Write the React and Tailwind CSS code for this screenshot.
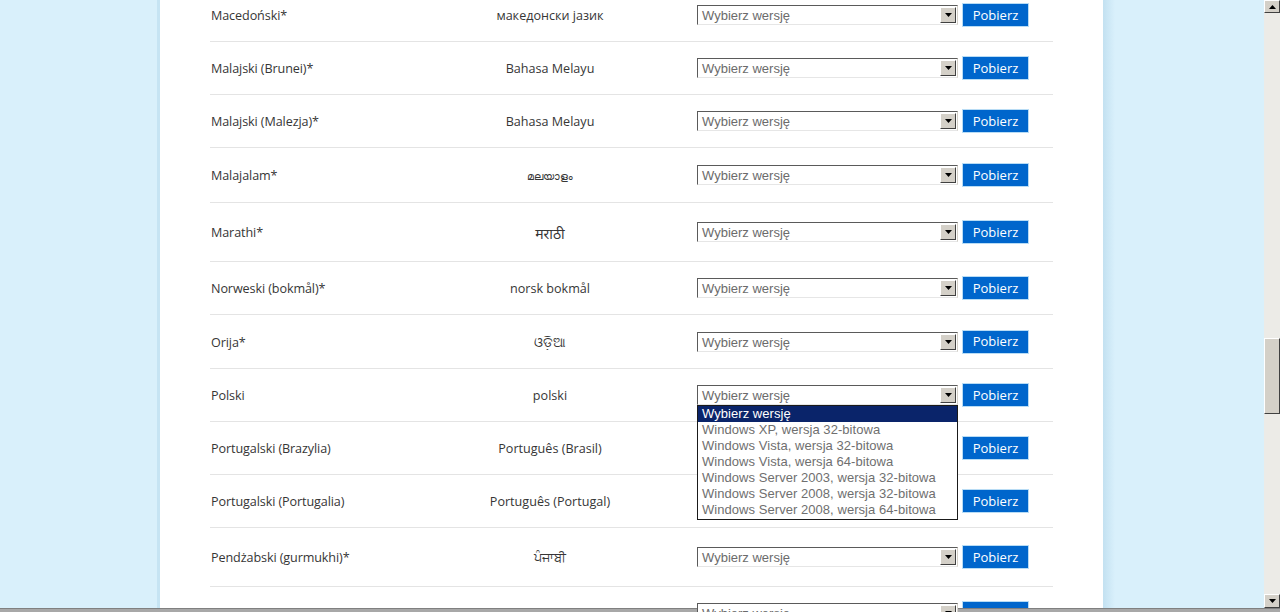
const rows = [
  { name: "Macedoński*", native: "македонски јазик", h: "h-[53px]" },
  { name: "Malajski (Brunei)*", native: "Bahasa Melayu", h: "h-[53px]" },
  { name: "Malajski (Malezja)*", native: "Bahasa Melayu", h: "h-[53px]" },
  { name: "Malajalam*", native: "മലയാളം", h: "h-[55px]", small: true },
  { name: "Marathi*", native: "मराठी", h: "h-[59px]", big: true },
  { name: "Norweski (bokmål)*", native: "norsk bokmål", h: "h-[53px]" },
  { name: "Orija*", native: "ଓଡ଼ିଆ", h: "h-[54px]" },
  { name: "Polski", native: "polski", h: "h-[53px]", open: true },
  { name: "Portugalski (Brazylia)", native: "Português (Brasil)", h: "h-[53px]" },
  { name: "Portugalski (Portugalia)", native: "Português (Portugal)", h: "h-[53px]" },
  { name: "Pendżabski (gurmukhi)*", native: "ਪੰਜਾਬੀ", h: "h-[59px]" },
  { name: "Rumuński", native: "română", h: "h-[53px]" },
];

const options = [
  "Wybierz wersję",
  "Windows XP, wersja 32-bitowa",
  "Windows Vista, wersja 32-bitowa",
  "Windows Vista, wersja 64-bitowa",
  "Windows Server 2003, wersja 32-bitowa",
  "Windows Server 2008, wersja 32-bitowa",
  "Windows Server 2008, wersja 64-bitowa",
];

function Arrow({ up }) {
  return (
    <svg width="7" height="4" viewBox="0 0 7 4">
      <path d={up ? "M0 4 L3.5 0 L7 4 Z" : "M0 0 L7 0 L3.5 4 Z"} fill="#000" />
    </svg>
  );
}

function ClassicButton({ className = "", children }) {
  return (
    <div className={`flex items-center justify-center bg-[#d4d0c8] border border-t-white border-l-white border-r-[#404040] border-b-[#404040] ${className}`}>
      {children}
    </div>
  );
}

function VersionSelect({ open }) {
  return (
    <div className="relative">
      <div className="flex h-[20px] w-[261px] items-center border border-t-[#5a5a5a] border-l-[#5a5a5a] border-r-[#d4d0c8] border-b-[#e6e6e6] bg-white pl-[4px] pr-[1px] font-['Liberation_Sans',Arial,sans-serif] text-[13px] text-[#6b6b6b]">
        <span className="flex-1 pt-[1px] leading-none">Wybierz wersję</span>
        <ClassicButton className="h-[16px] w-[16px]">
          <Arrow />
        </ClassicButton>
      </div>
      {open && (
        <div className="absolute left-0 top-[20px] z-10 w-[261px] border border-[#1a1a1a] bg-white pb-[1px] font-['Liberation_Sans',Arial,sans-serif] text-[13px] leading-[16px] text-[#6f6f6f]">
          {options.map((o, i) => (
            <div key={o} className={`pl-[4px] tracking-[0.05px] ${i === 0 ? "bg-[#0a246a] text-white" : ""}`}>
              {o}
            </div>
          ))}
        </div>
      )}
    </div>
  );
}

export default function App() {
  return (
    <div className="flex h-[612px] w-[1280px] flex-col overflow-hidden bg-[#d9f0fb]">
      <div className="flex min-h-0 flex-1">
        <div className="flex min-w-0 flex-1">
          <div className="ml-[157px] w-[3px] bg-[#c6e4f3]" />
          <div className="w-[943px] bg-white pl-[50px] pr-[50px] font-['Open_Sans','Noto_Sans',sans-serif] text-[12.6px] text-[#363636]">
            <div className="-mt-[11px]">
              {rows.map((r) => (
                <div key={r.name} className={`grid grid-cols-[193px_294px_1fr] items-center border-b border-[#e4e4e4] ${r.h}`}>
                  <div className="pl-[1px] pt-[3px] tracking-[-0.1px]">{r.name}</div>
                  <div className={`pt-[3px] text-center ${r.small ? "text-[11px]" : ""} ${r.big ? "text-[14px]" : ""}`}>{r.native}</div>
                  <div className="flex items-center gap-[4px]">
                    <VersionSelect open={r.open} />
                    <button className="h-[24px] w-[67px] border border-[#b8dcf5] bg-[#0066cc] pt-[1px] font-['Open_Sans','Noto_Sans',sans-serif] text-[13px] text-white">
                      Pobierz
                    </button>
                  </div>
                </div>
              ))}
            </div>
          </div>
          <div className="w-[12px] bg-gradient-to-r from-[#c3e1f1] to-[#d9f0fb]" />
        </div>
        <div className="flex w-[16px] flex-col bg-[#ecebe7]">
          <ClassicButton className="h-[13px] w-[16px]">
            <Arrow up />
          </ClassicButton>
          <div className="h-[325px]" />
          <div className="h-[76px] w-[16px] border border-t-white border-l-white border-r-[#404040] border-b-[#404040] bg-[#d4d0c8]" />
          <div className="flex-1" />
          <ClassicButton className="h-[14px] w-[16px]">
            <Arrow />
          </ClassicButton>
        </div>
      </div>
      <div className="h-[4px] border-t border-[#808080] bg-[#a8a8a8]" />
    </div>
  );
}
